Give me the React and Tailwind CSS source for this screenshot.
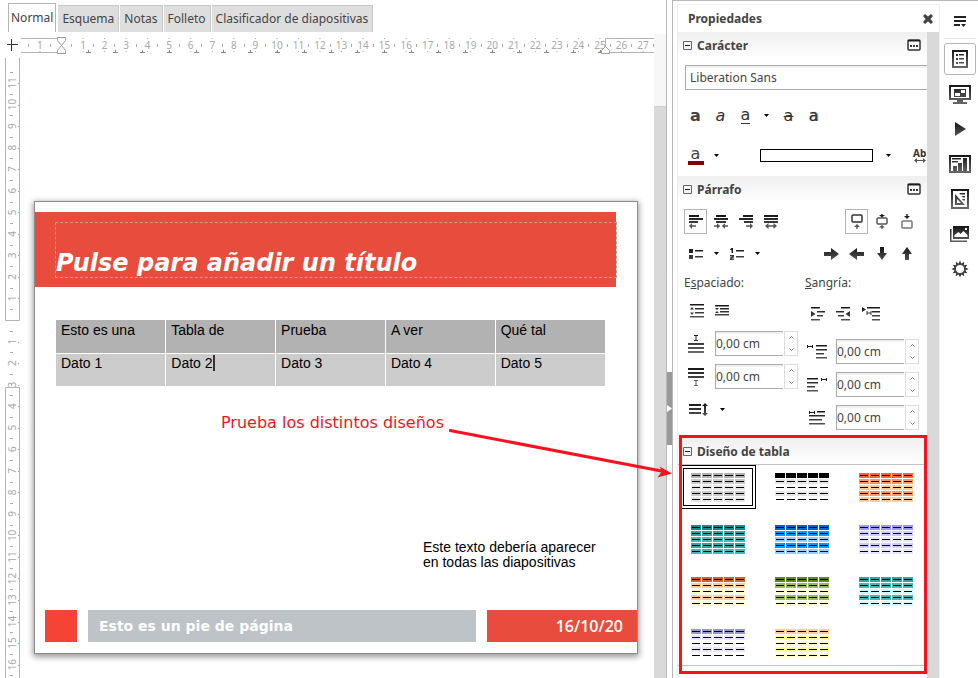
import React from "react";

const range = (from, to) => Array.from({ length: to - from + 1 }, (_, i) => from + i);
const UNIT = 21.54;

function Icon({ w, h, children, className = "" }) {
  return (
    <svg width={w} height={h} viewBox={`0 0 ${w} ${h}`} className={`shrink-0 ${className}`} fill="url(#ink)" aria-hidden="true">
      {children}
    </svg>
  );
}

/* Horizontal bars given as [x, y, width] */
function Bars({ rows, t = 2 }) {
  return rows.map(([x, y, w], i) => <rect key={i} x={x} y={y} width={w} height={t} />);
}

const Caret = () => <Icon w={5} h={3}><path d="M0 0h5L2.500 3z" fill="#000" /></Icon>;

function Tool({ label, active, children, className = "" }) {
  return (
    <button
      type="button"
      aria-label={label}
      className={`mx-px flex h-[25px] w-[23px] shrink-0 items-center justify-center border ${active ? "border-[#b4b4b4] bg-[#fcfcfc]" : "border-transparent"} ${className}`}
    >
      {children}
    </button>
  );
}

function Drop({ label }) {
  return (
    <button type="button" aria-label={label} className="flex h-[25px] w-4 shrink-0 items-center justify-center">
      <Caret />
    </button>
  );
}

const AlignIcons = {
  left: (
    <Icon w={14} h={14}>
      <Bars rows={[[0, 0, 10], [0, 3, 14], [0, 6, 9]]} />
      <path d="M0 11l3-3v2.300h4v1.400H3V14z" fill="#555" />
    </Icon>
  ),
  center: (
    <Icon w={14} h={14}>
      <Bars rows={[[2, 0, 10], [0, 3, 14], [2, 6, 10]]} />
      <path d="M0 10.300h3V8.300L6.300 11 3 13.700v-2H0zM14 10.300h-3V8.300L7.700 11l3.300 2.700v-2h3z" fill="#555" />
    </Icon>
  ),
  right: (
    <Icon w={14} h={14}>
      <Bars rows={[[4, 0, 10], [0, 3, 14], [5, 6, 9]]} />
      <path d="M14 11l-3-3v2.300H7v1.400h4V14z" fill="#555" />
    </Icon>
  ),
  justify: (
    <Icon w={14} h={14}>
      <Bars rows={[[0, 0, 14], [0, 3, 14], [0, 6, 14]]} />
      <path d="M1 11l3.500-3v2.300h5V8l3.500 3-3.500 3v-2.300h-5V14z" fill="#555" />
    </Icon>
  ),
};

function HorizontalRuler() {
  const zero = 61.5;
  return (
    <svg width="654" height="18" viewBox="0 36 654 18" className="block h-[18px] w-full" preserveAspectRatio="xMinYMin slice" fontFamily="'Noto Sans', sans-serif" fontSize="10" fill="#a8a8a8" textAnchor="middle">
      <path d="M11.500 39v12M7 44.500h11" stroke="#333" />
      <path d="M21 38.500h40M21 52.500h40M654 38.500H605.500V52.500H654" stroke="#b4b4b4" fill="none" />
      {[-1, ...range(1, 27)].map((n) => (
        <g key={n}>
          <text x={zero + n * UNIT} y="49">{Math.abs(n)}</text>
          <path d={`M${zero + n * UNIT - 0.5} 38h1v1h-1zM${zero + n * UNIT - 0.5} 51h1v1h-1z`} />
        </g>
      ))}
      {range(-2, 27).map((n) => (
        <rect key={n} x={Math.round(zero + (n + 0.5) * UNIT) - 1} y="44" width="1" height="3" />
      ))}
      {range(1, 20).map((n) => {
        const x = Math.floor(zero + n * 26.95);
        return <path key={n} d={`M${x + 0.5} 50v3M${x - 2} 52.500h5`} stroke="#888" fill="none" />;
      })}
      <path d="M57.500 37.500h8v3l-4 5 4 5v3h-8v-3l4-5-4-5z" fill="#fff" stroke="#999" />
      <path d="M601.500 53.500v-3l4-4 4 4v3z" fill="#fff" stroke="#999" />
    </svg>
  );
}

function VerticalRuler() {
  const zero = 320;
  return (
    <svg width="20" height="620" viewBox="0 58 20 620" className="block shrink-0" fontFamily="'Noto Sans', sans-serif" fontSize="10" fill="#a8a8a8" textAnchor="middle">
      <path d="M5.500 58V320.500H19.500V58M5.500 678V387.500H19.500V678" stroke="#b4b4b4" fill="none" />
      {[...range(-11, -1), ...range(1, 16)].map((n) => {
        const y = zero + n * UNIT;
        return (
          <g key={n}>
            <text transform={`translate(16 ${y}) rotate(-90)`}>{Math.abs(n)}</text>
            <rect x="18" y={Math.round(y)} width="1" height="1" />
          </g>
        );
      })}
      {range(-12, 16).map((n) => (
        <rect key={n} x="10" y={Math.round(zero + (n + 0.5) * UNIT)} width="3" height="1" />
      ))}
    </svg>
  );
}

function Slide() {
  return (
    <article className="ml-[14px] flex h-[453px] w-[604px] shrink-0 flex-col overflow-hidden border border-[#8c8c8c] bg-white shadow-[0_2px_6px_1px_rgba(0,0,0,0.4)]">
      <div className="mt-[10px] mr-[21px] flex h-[75px] shrink-0 bg-[#e84c3d] pt-[10px] pl-5">
        <h1 className="-mr-px flex h-[56px] flex-1 items-end border border-dashed border-[#cf9a92] font-['DejaVu_Sans',sans-serif] text-[24px] leading-[28px] font-bold text-white italic">
          Pulse para añadir un título
        </h1>
      </div>
      <table className="mt-[33px] ml-[21px] w-[549px] table-fixed border-collapse font-['Liberation_Sans',Arial,sans-serif] text-[14px] leading-4 text-black">
        <thead>
          <tr className="h-[33px] bg-[#b2b2b2]">
            {["Esto es una", "Tabla de", "Prueba", "A ver", "Qué tal"].map((t) => (
              <th key={t} className="border-r border-b border-white px-[5px] pt-[2px] text-left align-top font-normal last:border-r-0">{t}</th>
            ))}
          </tr>
        </thead>
        <tbody>
          <tr className="h-[33px] bg-[#cccccc]">
            {range(1, 5).map((n) => (
              <td key={n} className="border-r border-white px-[5px] pt-px align-top last:border-r-0">
                <span className={n === 2 ? "border-r-2 border-[#333]" : ""}>Dato {n}</span>
              </td>
            ))}
          </tr>
        </tbody>
      </table>
      <p className="mt-[27px] ml-[186px] font-['DejaVu_Sans',sans-serif] text-[16px] leading-5 text-[#f0141e]">Prueba los distintos diseños</p>
      <p className="mt-auto mb-10 ml-[388px] w-[176px] font-['Liberation_Sans',Arial,sans-serif] text-[14px] leading-[15px] text-black">
        Este texto debería aparecer en todas las diapositivas
      </p>
      <footer className="mb-[11px] flex h-8 shrink-0 pl-[10px] text-white">
        <div className="w-8 bg-[#f54336]" />
        <div className="ml-[11px] flex flex-1 items-center bg-[#bdc3c7] pl-[11px] font-['DejaVu_Sans',sans-serif] text-[14px] font-bold">Esto es un pie de página</div>
        <time className="ml-[11px] flex w-[150px] items-center justify-end bg-[#e84c3d] pr-[14px] font-['Open_Sans',sans-serif] text-[16px] font-semibold">16/10/20</time>
      </footer>
    </article>
  );
}

function SectionHeader({ title, more }) {
  return (
    <header className="flex h-[26px] items-center bg-linear-to-b from-[#efefef] to-white pr-[6px] pl-[5px]">
      <button type="button" aria-label={`Contraer ${title}`} className="flex">
        <Icon w={9} h={9}><path d="M.5.5h8v8h-8z" fill="#f4f4f4" stroke="#666" /><path d="M2 4h5v1H2z" fill="#222" /></Icon>
      </button>
      <h2 className="ml-[5px] flex-1 pt-px font-bold">{title}</h2>
      {more && (
        <button type="button" aria-label={`Más opciones de ${title}`} className="flex">
          <Icon w={14} h={12}>
            <rect x="1" y="1" width="12" height="10" rx="1" fill="#fff" stroke="#333" strokeWidth="1.500" />
            <path d="M1 1h12v1.500H1zM3 6h2v2H3zM6 6h2v2H6zM9 6h2v2H9z" />
          </Icon>
        </button>
      )}
    </header>
  );
}

function CharacterSection() {
  return (
    <section className="h-36 overflow-hidden">
      <SectionHeader title="Carácter" more />
      <input aria-label="Fuente" defaultValue="Liberation Sans" className="mt-[7px] ml-[7px] block h-[25px] w-[calc(100%+8px)] border border-[#aaa] bg-white pl-1 shadow-[inset_0_2px_0_#f0f0f0]" />
      <div className="mt-[13px] flex pl-[5px] font-['DejaVu_Sans',sans-serif] text-[16px] leading-5 text-[#333]">
        <Tool label="Negrita"><span className="font-bold text-[#444]">a</span></Tool>
        <Tool label="Cursiva"><span className="italic">a</span></Tool>
        <Tool label="Subrayado"><span className="border-b border-[#333] leading-4">a</span></Tool>
        <Drop label="Tipo de subrayado" />
        <span className="w-[2px]" />
        <Tool label="Tachado"><span className="line-through decoration-1">a</span></Tool>
        <Tool label="Sombra"><span className="[text-shadow:1px_0_1px_#777]">a</span></Tool>
      </div>
      <div className="mt-[15px] flex items-center pl-[5px]">
        <Tool label="Color de fuente"><span className="-mx-1 w-4 shrink-0 border-b-4 border-[#850000] text-center font-['DejaVu_Sans',sans-serif] text-[16px] leading-[14px] text-[#444]">a</span></Tool>
        <Drop label="Elegir color de fuente" />
        <button type="button" aria-label="Color de resaltado" className="ml-9 h-[13px] w-[113px] shrink-0 border border-black bg-white" />
        <span className="w-[7px] shrink-0" />
        <Drop label="Elegir color de resaltado" />
        <button type="button" aria-label="Espaciado entre caracteres" className="ml-[17px] flex shrink-0 flex-col items-center text-[10px] leading-[10px] font-bold text-[#333]">
          Ab
          <Icon w={12} h={5}><path d="M0 2.500L3 0v2h6V0l3 2.500L9 5V3H3v2z" fill="#555" /></Icon>
        </button>
      </div>
    </section>
  );
}

function Spin({ label, icon }) {
  return (
    <div className="flex h-[25px] items-center">
      <span className="mr-[7px] flex w-6 justify-center">{icon}</span>
      <input aria-label={label} defaultValue="0,00 cm" className="h-full w-[68px] border border-r-0 border-[#aaa] bg-white shadow-[inset_0_2px_0_#f0f0f0]" />
      <div className="ml-px flex h-full w-[14px] flex-col border border-[#ddd]">
        <button type="button" aria-label={`Aumentar ${label}`} className="flex flex-1 items-center justify-center"><Icon w={5} h={3}><path d="M.5 2.500l2-2 2 2" fill="none" stroke="#777" /></Icon></button>
        <button type="button" aria-label={`Reducir ${label}`} className="flex flex-1 items-center justify-center"><Icon w={5} h={3}><path d="M.5.5l2 2 2-2" fill="none" stroke="#777" /></Icon></button>
      </div>
    </div>
  );
}

function ParagraphSection() {
  const arrow = "M0 5h7V1l8 6-8 6V9H0z";
  return (
    <section className="h-[261px]">
      <SectionHeader title="Párrafo" more />
      <div className="mt-[7px] flex justify-between pr-2 pl-[5px]">
        <div className="flex">
          <Tool label="Alinear a la izquierda" active>{AlignIcons.left}</Tool>
          <Tool label="Centrar">{AlignIcons.center}</Tool>
          <Tool label="Alinear a la derecha">{AlignIcons.right}</Tool>
          <Tool label="Justificar">{AlignIcons.justify}</Tool>
        </div>
        <div className="flex">
          <Tool label="Alinear arriba" active>
            <Icon w={12} h={15}><rect x="1" y="1" width="10" height="7" rx="1" fill="none" stroke="#333" strokeWidth="1.500" /><path d="M6 10l3 3H6.700v2H5.300v-2H3z" fill="#555" /></Icon>
          </Tool>
          <Tool label="Centrar verticalmente">
            <Icon w={12} h={15}><rect x="1" y="4" width="10" height="6" rx="1" fill="none" stroke="#555" strokeWidth="1.500" /><path d="M5.300 0h1.400v1H9L6 3.500 3 1h2.300zM6 11l3 2.500H6.700V15H5.300v-1.500H3z" /></Icon>
          </Tool>
          <Tool label="Alinear abajo">
            <Icon w={12} h={15}><rect x="1" y="7" width="10" height="7" rx="1" fill="none" stroke="#777" strokeWidth="1.500" /><path d="M5.300 0h1.400v2H9L6 5 3 2h2.300z" /></Icon>
          </Tool>
        </div>
      </div>
      <div className="mt-[7px] flex justify-between pr-2 pl-[5px]">
        <div className="flex">
          <Tool label="Viñetas"><Icon w={14} h={10}><path d="M0 0h4v4H0zM0 6h4v4H0zM6 1h8v1.500H6zM6 7h8v1.500H6z" /></Icon></Tool>
          <Drop label="Tipo de viñeta" />
          <Tool label="Numeración">
            <Icon w={14} h={12}><path d="M0 1.500L1.500 0H3v5H1.500V2H0zM0 7h4v2.500L1.500 10.500H4V12H0V9.500L2.500 8.500H0zM6 2h8v1.500H6zM6 8h8v1.500H6z" /></Icon>
          </Tool>
          <Drop label="Tipo de numeración" />
        </div>
        <div className="flex">
          <Tool label="Disminuir nivel"><Icon w={15} h={14}><path d={arrow} /></Icon></Tool>
          <Tool label="Aumentar nivel"><Icon w={15} h={14}><path d={arrow} transform="matrix(-1 0 0 1 15 0)" /></Icon></Tool>
          <Tool label="Bajar"><Icon w={10} h={13}><path d="M3 0h4v6h3l-5 7-5-7h3z" /></Icon></Tool>
          <Tool label="Subir"><Icon w={10} h={13}><path d="M3 13h4V7h3L5 0 0 7h3z" /></Icon></Tool>
        </div>
      </div>
      <div className="mt-[9px] flex gap-[7px] pl-[6px]">
        <div className="w-[114px] shrink-0">
          <h3>E<u>s</u>paciado:</h3>
          <div className="mt-[7px] mb-2 flex">
            <Tool label="Aumentar espaciado"><Icon w={14} h={14}><Bars rows={[[0, 0, 14], [5, 4, 9], [5, 8, 9], [0, 12, 14]]} t={1.5} /><path d="M0 5.500l2-2.500 2 2.500zM0 8.500L2 11l2-2.500z" /></Icon></Tool>
            <Tool label="Reducir espaciado"><Icon w={14} h={11}><Bars rows={[[0, 0, 14], [5, 3, 9], [5, 6, 9], [0, 9, 14]]} t={1.5} /><path d="M0 3h4L2 5zM0 8h4L2 6z" /></Icon></Tool>
          </div>
          <div className="flex flex-col gap-2">
            <Spin label="Espaciado encima" icon={<Icon w={16} h={18}><path d="M6 0h4v1H8.500v4H10v1H6V5h1.500V1H6zM0 8h16v2H0zM0 12h16v2H0zM0 16h16v2H0z" /></Icon>} />
            <Spin label="Espaciado debajo" icon={<Icon w={16} h={18}><path d="M6 12h4v1H8.500v4H10v1H6v-1h1.500v-4H6zM0 0h16v2H0zM0 4h16v2H0zM0 8h16v2H0z" /></Icon>} />
          </div>
          <button type="button" aria-label="Interlineado" className="mt-[14px] ml-[5px] flex items-center gap-3">
            <Icon w={19} h={13}><path d="M0 1h12v2H0zM0 5h12v2H0zM0 9h12v2H0zM16 0l3 3h-2v7h2l-3 3-3-3h2V3h-2z" /></Icon>
            <Caret />
          </button>
        </div>
        <div className="w-[114px] shrink-0">
          <h3><u>S</u>angría:</h3>
          <div className="mt-[10px] mb-[13px] flex">
            <Tool label="Aumentar sangría"><Icon w={14} h={14}><Bars rows={[[0, 0, 9], [6, 4, 8], [6, 8, 6], [0, 12, 9]]} t={1.5} /><path d="M0 4l4.500 3L0 10z" /></Icon></Tool>
            <Tool label="Reducir sangría"><Icon w={14} h={14}><Bars rows={[[5, 0, 9], [0, 4, 8], [2, 8, 6], [5, 12, 9]]} t={1.5} /><path d="M14 4L9.500 7l4.500 3z" /></Icon></Tool>
            <Tool label="Sangría francesa" className="ml-1"><Icon w={18} h={14}><Bars rows={[[5, 0, 13], [10, 4, 8], [10, 8, 8], [10, 12, 8]]} t={1.5} /><path d="M0 0l4 2.500L0 5zM4.500 4h1v1.500h3V4h1v4h-1V6.500h-3V8h-1z" /></Icon></Tool>
          </div>
          <div className="flex flex-col gap-2">
            <Spin label="Antes del texto" icon={<Icon w={20} h={14}><Bars rows={[[9, 0, 11], [9, 4, 11], [9, 8, 8], [9, 12, 11]]} t={1.5} /><path d="M0 0h1v1h4V0h1v3H5V2H1v1H0z" /></Icon>} />
            <Spin label="Después del texto" icon={<Icon w={20} h={14}><Bars rows={[[0, 0, 11], [0, 4, 11], [0, 8, 8], [0, 12, 11]]} t={1.5} /><path d="M14 0h1v1h4V0h1v3h-1V2h-4v1h-1z" /></Icon>} />
            <Spin label="Primera línea" icon={<Icon w={16} h={14}><Bars rows={[[8, 0, 8], [0, 4, 16], [0, 8, 13], [0, 12, 16]]} t={1.5} /><path d="M0 0h1v1h4V0h1v3H5V2H1v1H0z" /></Icon>} />
          </div>
        </div>
      </div>
    </section>
  );
}

/* Row colours of every design: header row first, then the four body rows */
const designs = [
  { name: "Gris", rows: ["#b2b2b2", "#cccccc", "#e6e6e6", "#cccccc", "#e6e6e6"] },
  { name: "Negro", rows: ["#000000", "#e6e6e6", "#ffffff", "#e6e6e6", "#ffffff"] },
  { name: "Naranja", rows: ["#ff6633", "#ff9966", "#ffcc99", "#ff9966", "#ffcc99"] },
  { name: "Turquesa", rows: ["#198a8a", "#33a3a3", "#47b8b8", "#33a3a3", "#47b8b8"] },
  { name: "Azul", rows: ["#0066cc", "#0099ff", "#99ccff", "#0099ff", "#99ccff"] },
  { name: "Lavanda", rows: ["#9999ff", "#ccccff", "#e6e6ff", "#ccccff", "#e6e6ff"] },
  { name: "Tierra", rows: ["#d2642a", "#ffcc99", "#ffffcc", "#ffcc99", "#ffffcc"] },
  { name: "Verde", rows: ["#5c8a1f", "#94bd5e", "#ffffcc", "#94bd5e", "#ffffcc"] },
  { name: "Mar", rows: ["#33a3a3", "#47b8b8", "#ccffff", "#47b8b8", "#ccffff"] },
  { name: "Violeta", rows: ["#9999cc", "#e6e6ff", "#ffffff", "#e6e6ff", "#ffffff"] },
  { name: "Amarillo", rows: ["#ffcc99", "#ffff99", "#ffffcc", "#ffff99", "#ffffcc"] },
];

function DesignSection() {
  return (
    <section className="relative h-[235px] shrink-0 pt-px">
      <SectionHeader title="Diseño de tabla" />
      <div className="grid grid-cols-[76px_76px_76px] gap-2 border-y border-[#c4c4c4] pl-[2px]">
        {designs.map((d, i) => (
          <button key={d.name} type="button" aria-label={d.name} aria-pressed={i === 0} className={`flex h-11 items-center justify-center ${i === 0 ? "border-4 border-double border-black" : ""}`}>
            <svg width="54" height="29" viewBox="0 0 54 29" className="shrink-0" shapeRendering="crispEdges">
              {d.rows.map((color, r) =>
                range(0, 4).map((c) => (
                  <g key={`${r}-${c}`}>
                    <rect x={c * 11} y={r * 6} width="10" height="5" fill={color} />
                    <rect x={c * 11 + 1} y={r * 6 + 2} width="8" height="1" fill="#000" />
                  </g>
                ))
              )}
            </svg>
          </button>
        ))}
      </div>
      <div className="pointer-events-none absolute -top-[2px] right-0 -bottom-[2px] left-px border-3 border-[#f5141e]" />
    </section>
  );
}

const decks = [
  { label: "Propiedades", active: true, icon: <Icon w={16} h={18}><path d="M0 0h16v18H0zM2 2v14h12V2z" fillRule="evenodd" /><path d="M4 4h2v2H4zM4 8h2v2H4zM4 12h2v2H4zM7 4h5v1.500H7zM7 8h5v1.500H7zM7 12h5v1.500H7z" /></Icon> },
  { label: "Transición", icon: <Icon w={22} h={19}><path d="M0 0h22v15h-8v2h4v2H4v-2h4v-2H0zM2 2v11h18V2zM5 4h12v8H5zM12 5v3h4V5zM6 8v3h5V8z" fillRule="evenodd" /></Icon> },
  { label: "Animación", icon: <Icon w={12} h={14}><path d="M1 0l11 7-11 7z" /></Icon> },
  { label: "Patrones", icon: <Icon w={22} h={18}><path d="M0 0h22v18H0zM2 2v14h18V2z" fillRule="evenodd" /><path d="M3 3h9v1.500H3zM3 6h6v1.500H3zM4 11h4v5H4zM9 8h4v8H9zM14 3h4v13h-4z" /></Icon> },
  { label: "Estilos", icon: <Icon w={18} h={20}><path d="M0 0h18v20H0zM2 2v16h14V2z" fillRule="evenodd" /><path d="M4 5l10 11H4zM6 10v4h4zM8 4h6v1.500H9.500zM10.500 7H14v1.500h-2zM11 10h3v1.500h-2z" fillRule="evenodd" /></Icon> },
  { label: "Galería", icon: <Icon w={19} h={16}><path d="M0 3h1.500v11.500H17V16H0zM3 0h16v13H3zM4.500 11h13v-2l-4-4-3 3-2-2-4 3zM15 2v2h2V2z" fillRule="evenodd" /></Icon> },
  { label: "Navegador", icon: <Icon w={18} h={18}><circle cx="9" cy="9" r="5" fill="none" stroke="#444" strokeWidth="2" />{range(0, 11).map((n) => <path key={n} d="M7.800 3.500L9 .5l1.200 3z" transform={`rotate(${n * 30} 9 9)`} />)}</Icon> },
];

export default function App() {
  return (
    <div className="relative flex h-screen overflow-hidden bg-white font-['Noto_Sans',sans-serif] text-[12px] leading-4 text-[#444]">
      <svg width="0" height="0" className="absolute" aria-hidden="true">
        <linearGradient id="ink" gradientUnits="userSpaceOnUse" x1="0" y1="0" x2="0" y2="17">
          <stop offset="0" stopColor="#151515" />
          <stop offset="1" stopColor="#666" />
        </linearGradient>
      </svg>

      <main className="flex min-w-0 flex-1 flex-col">
        <nav className="flex h-[34px] shrink-0 items-start pt-[3px] pl-2">
          <button type="button" className="h-[29px] border border-b-0 border-[#b4b4b4] px-[2px]">Normal</button>
          <div className="mt-[2px] ml-[2px] flex gap-px">
            {["Esquema", "Notas", "Folleto", "Clasificador de diapositivas"].map((t) => (
              <button key={t} type="button" className="h-[27px] border-t border-r border-[#c8c8c8] bg-[#dedede] px-1 whitespace-nowrap">{t}</button>
            ))}
          </div>
        </nav>
        <div className="flex min-h-0 flex-1">
          <div className="flex min-w-0 flex-1 flex-col pt-[2px]">
            <HorizontalRuler />
            <div className="flex min-h-0 flex-1 overflow-hidden pt-1">
              <VerticalRuler />
              <div className="flex min-w-0 flex-1 items-start pt-[143px]"><Slide /></div>
            </div>
          </div>
          <div className="w-3 shrink-0 bg-[#f7f7f7] pt-[72px]"><div className="h-full border-t border-[#ccc] bg-[#d9d9d9]" /></div>
        </div>
      </main>

      <div className="flex w-[7px] shrink-0 flex-col border-x border-[#b8b8b8] pt-[372px]">
        <button type="button" aria-label="Ocultar barra lateral" className="flex h-[73px] items-center justify-center bg-[#999]"><Icon w={5} h={7}><path d="M0 0l5 3.500L0 7z" fill="#fff" /></Icon></button>
      </div>

      <aside className="flex w-[305px] shrink-0 border-t border-[#b8b8b8] pt-[3px] pl-1">
        <div className="flex w-[263px] shrink-0 flex-col border border-b-0 border-[#eee]">
          <header className="flex h-[27px] shrink-0 items-center justify-between pr-[6px] pl-[10px]">
            <h2 className="font-bold">Propiedades</h2>
            <button type="button" aria-label="Cerrar" className="flex"><Icon w={10} h={10}><path d="M0 2l2-2 3 2.500L8 0l2 2-2.500 3L10 8l-2 2-3-2.500L2 10 0 8l2.500-3z" fill="#444" /></Icon></button>
          </header>
          <div className="flex min-h-0 flex-1">
            <div className="flex min-w-0 flex-1 flex-col">
              <CharacterSection />
              <ParagraphSection />
              <DesignSection />
            </div>
            <div className="w-3 shrink-0 bg-[#d9d9d9]" />
          </div>
        </div>
        <nav className="flex flex-1 flex-col items-center pl-px">
          <button type="button" aria-label="Configuración de la barra lateral" className="flex h-[35px] w-8 items-center justify-center border-b border-[#e4e4e4]">
            <Icon w={12} h={11}><path d="M0 0h12v2H0zM0 4h12v2H0zM0 8h6v2H0zM7 8h5l-2.500 3z" fill="#222" /></Icon>
          </button>
          <div className="mt-1 flex flex-col gap-[3px]">
            {decks.map((d) => (
              <button key={d.label} type="button" aria-label={d.label} className={`flex h-8 w-8 items-center justify-center rounded-[3px] border ${d.active ? "border-[#b4b4b4]" : "border-transparent"}`}>{d.icon}</button>
            ))}
          </div>
        </nav>
      </aside>

      <svg className="pointer-events-none absolute top-[425px] right-[305px]" width="224" height="56" viewBox="449 425 224 56" fill="#f5141e" aria-hidden="true">
        <path d="M450 430.500L664 471.500" stroke="#f5141e" strokeWidth="3" strokeLinecap="round" />
        <path d="M672 473.500L659.500 466.500l2.500 4.700-4.500 6.300z" />
      </svg>
    </div>
  );
}
